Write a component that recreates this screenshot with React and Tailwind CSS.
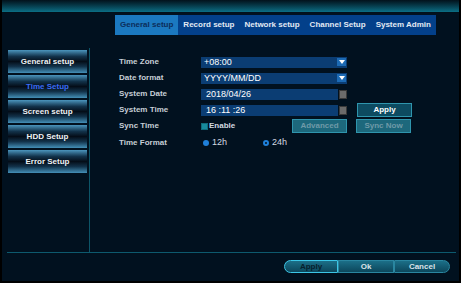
import React from 'react';

const TABS = ['General setup', 'Record setup', 'Network setup', 'Channel Setup', 'System Admin'];
const MENU = ['General setup', 'Time Setup', 'Screen setup', 'HDD Setup', 'Error Setup'];

function DropArrow() {
  return (
    <span className="w-[9px] h-[8px] bg-[#1c6ab4] flex items-center justify-center">
      <svg width="6" height="4" viewBox="0 0 6 4">
        <path d="M0 0H6L3 4Z" fill="#ffffff" />
      </svg>
    </span>
  );
}

function Field({ value, kind }) {
  if (kind === 'select') {
    return (
      <div className="w-[146px] h-[11px] bg-[#0b3d73] flex items-center justify-between pl-[3px] pr-[1px]">
        <span className="text-[9px] leading-none text-white">{value}</span>
        <DropArrow />
      </div>
    );
  }
  return (
    <div className="w-[146px] h-[11px] flex items-center">
      <div className="w-[137px] h-[11px] bg-[#0b3d73] flex items-center pl-[5px]">
        <span className="text-[9px] leading-none text-white whitespace-pre">{value}</span>
      </div>
      <span className="ml-[1px] w-[8px] h-[9px] bg-[#6b6b6b] border border-[#3a3a3a]" />
    </div>
  );
}

function Label({ children }) {
  return <span className="w-[82px] text-[8px] font-bold text-[#c6ced6]">{children}</span>;
}

function TealButton({ children, dim, className = '' }) {
  return (
    <button
      className={
        'h-[14px] w-[55px] border border-[#2f95ad] text-[8px] font-bold leading-none flex items-center justify-center ' +
        (dim ? 'bg-[#1d687c] text-[#6f9aa8] ' : 'bg-[#0d4b61] text-white ') +
        className
      }
    >
      {children}
    </button>
  );
}

export default function App() {
  return (
    <div className="w-[461px] h-[283px] bg-black overflow-hidden font-['Liberation_Sans',Arial,sans-serif]">
      <div className="ml-[2px] w-[457px] h-[281px] bg-[#01111f] flex flex-col">
        {/* Top bar */}
        <div className="h-[13px] bg-gradient-to-b from-[#02121c] to-[#0b6f86] border-b border-[#02101a]" />

        {/* Tabs */}
        <div className="mt-[2px] h-[20px] pl-[113px] flex">
          {TABS.map((t, i) => (
            <div
              key={t}
              className={
                'h-full px-[5px] flex items-center text-[8px] font-bold ' +
                (i === 0 ? 'bg-[#1b79c0] text-[#0b2d5a]' : 'bg-[#03408a] text-[#e2eaf4]')
              }
            >
              {t}
            </div>
          ))}
        </div>

        {/* Main */}
        <div className="mt-[13px] ml-[5px] w-[449px] h-[205px] border-b border-[#0d5a6e] flex">
          <div className="w-[83px] h-full border-r border-[#0d5568] pl-[1px] pt-[2px] flex flex-col gap-[2px]">
            {MENU.map((m, i) => (
              <div
                key={m}
                className={
                  'w-[79px] h-[23px] flex items-center justify-center text-[8px] font-bold bg-[linear-gradient(to_bottom,#4b95bd_0%,#12324a_28%,#040d18_50%,#12324a_72%,#4490b8_100%)] ' +
                  (i === 1 ? 'text-[#3b6df5]' : 'text-[#eef2f6]')
                }
              >
                {m}
              </div>
            ))}
          </div>

          <div className="flex-1 pl-[29px] pt-[6px] flex flex-col">
            <div className="h-[16px] flex items-center">
              <Label>Time Zone</Label>
              <Field kind="select" value="+08:00" />
            </div>
            <div className="h-[16px] flex items-center">
              <Label>Date format</Label>
              <Field kind="select" value="YYYY/MM/DD" />
            </div>
            <div className="h-[16px] flex items-center">
              <Label>System Date</Label>
              <Field value="2018/04/26" />
            </div>
            <div className="h-[16px] flex items-center">
              <Label>System Time</Label>
              <Field value="16 :11 :26" />
              <TealButton className="ml-[10px] w-[54px]">Apply</TealButton>
            </div>
            <div className="h-[16px] flex items-center">
              <Label>Sync Time</Label>
              <span className="w-[7px] h-[7px] bg-[#178b9d] border border-[#0f6c7c]" />
              <span className="ml-[1px] w-[83px] text-[8px] font-bold text-[#d2dae2]">Enable</span>
              <TealButton dim>Advanced</TealButton>
              <TealButton dim className="ml-[9px]">Sync Now</TealButton>
            </div>
            <div className="h-[17px] flex items-center">
              <Label>Time Format</Label>
              <span className="ml-[2px] w-[6px] h-[6px] rounded-full bg-[#1f80da]" />
              <span className="ml-[3px] w-[51px] text-[9px] text-[#d2dae2]">12h</span>
              <span className="w-[6px] h-[6px] rounded-full border-[2px] border-[#1f80da] bg-[#01111f]" />
              <span className="ml-[3px] text-[9px] text-[#d2dae2]">24h</span>
            </div>
          </div>
        </div>

        {/* Footer */}
        <div className="mt-[7px] pr-[9px] flex justify-end">
          <div className="flex h-[13px]">
            <button className="w-[54px] h-full rounded-l-full border border-[#3cc6e6] bg-gradient-to-b from-[#1c6f88] to-[#0c475c] text-[8px] font-bold text-[#06202c] flex items-center justify-center">
              Apply
            </button>
            <button className="w-[56px] h-full border border-[#2a86a0] bg-gradient-to-b from-[#1c6f88] to-[#0c475c] text-[8px] font-bold text-[#dbe3ea] flex items-center justify-center">
              Ok
            </button>
            <button className="w-[56px] h-full rounded-r-full border border-[#2a86a0] bg-gradient-to-b from-[#1c6f88] to-[#0c475c] text-[8px] font-bold text-[#dbe3ea] flex items-center justify-center">
              Cancel
            </button>
          </div>
        </div>
      </div>
    </div>
  );
}
